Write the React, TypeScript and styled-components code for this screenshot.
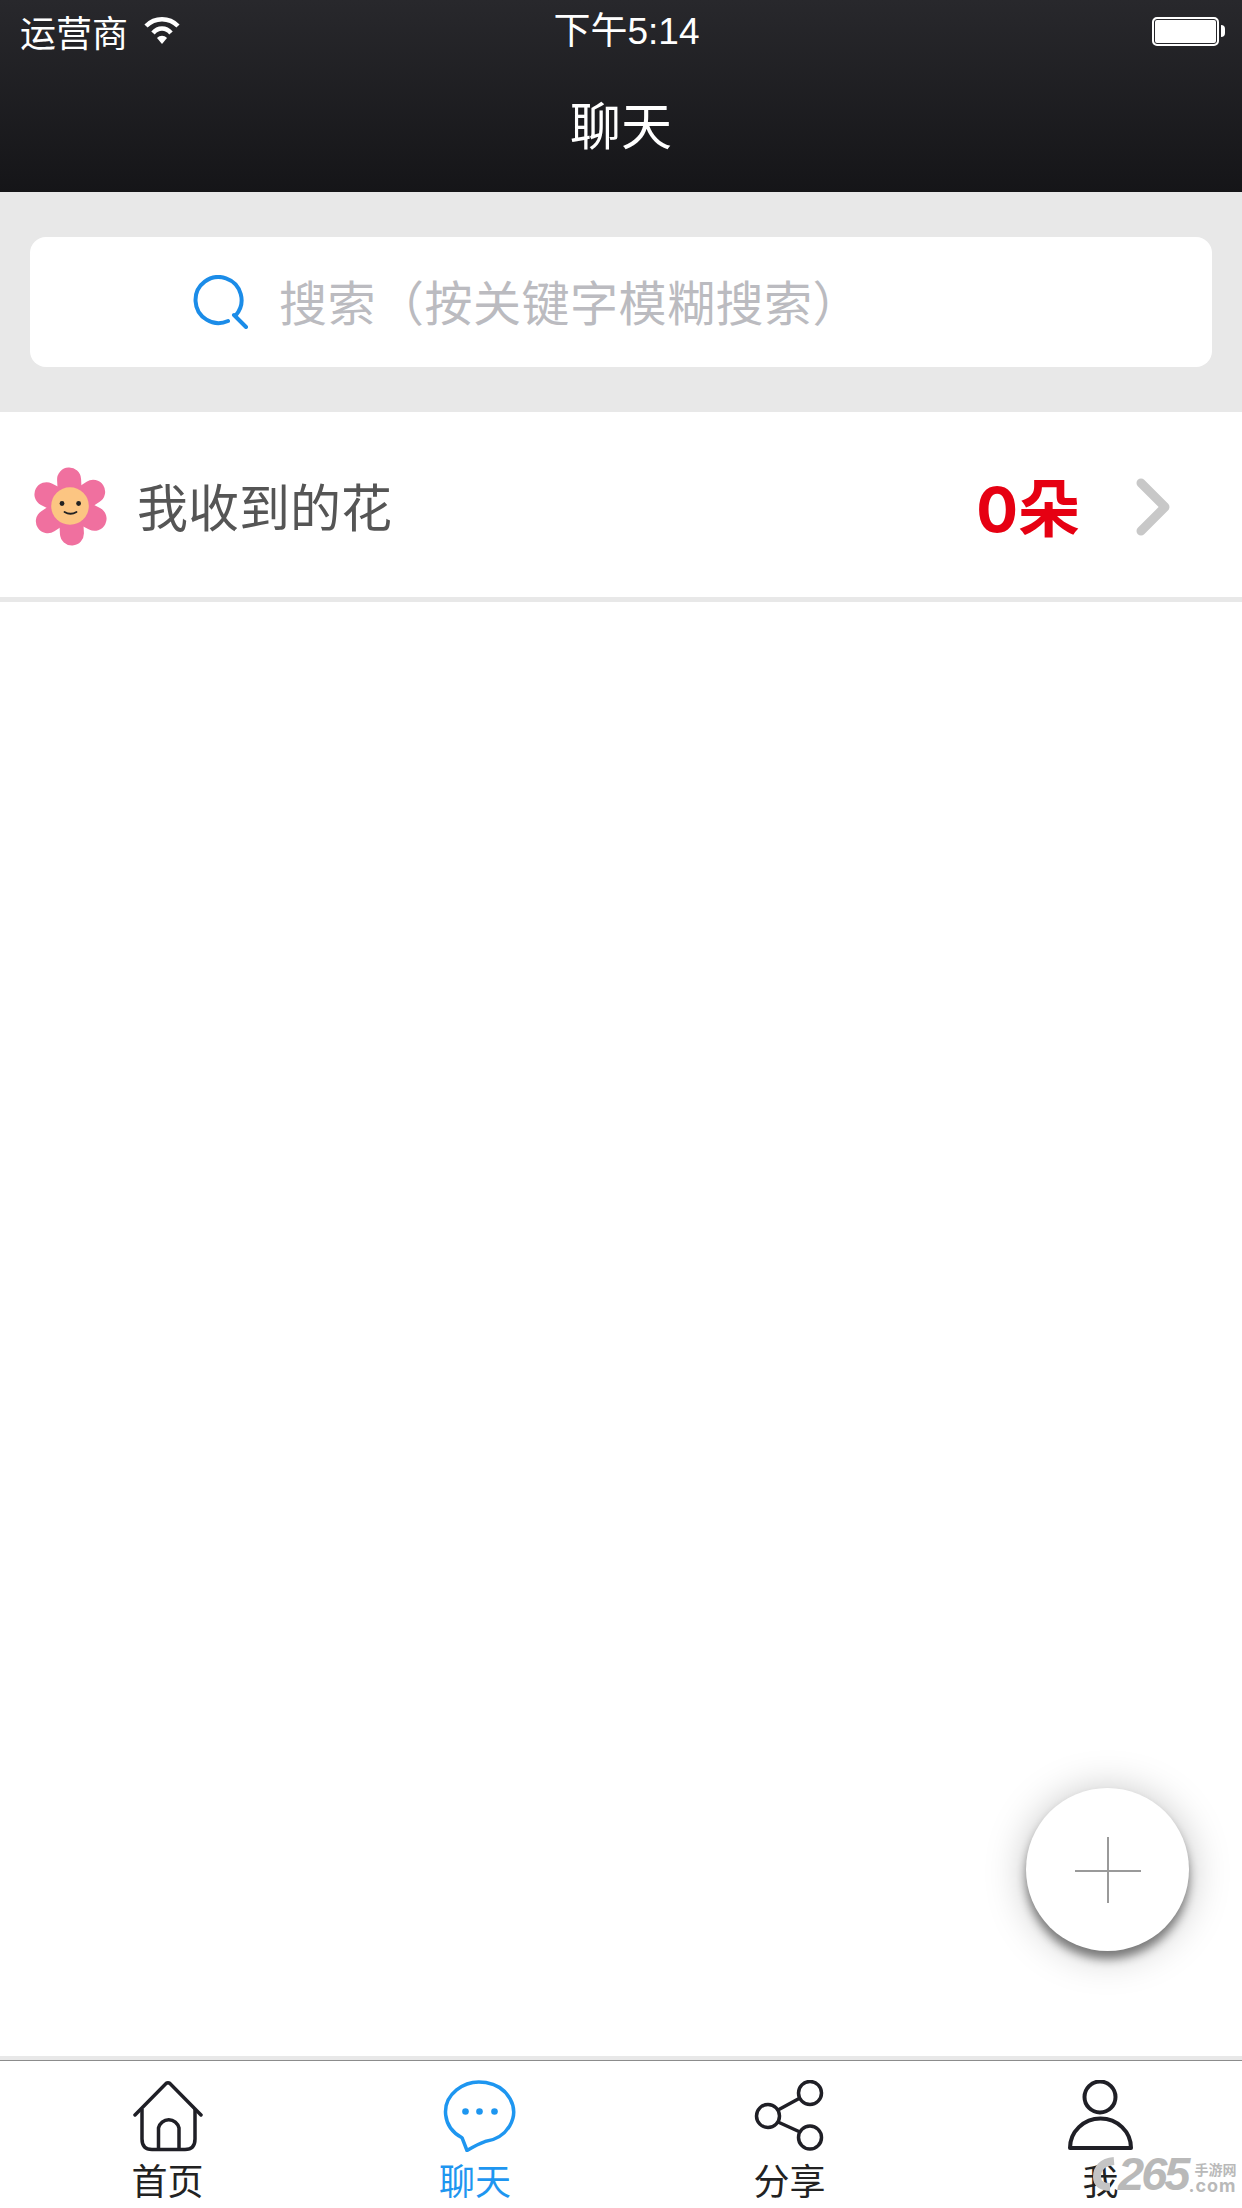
import styled, { createGlobalStyle } from "styled-components";

const CJK = `"Noto Sans CJK SC", "Liberation Sans", sans-serif`;

const GlobalStyle = createGlobalStyle`
  html, body {
    margin: 0;
    padding: 0;
    background: #fff;
  }
  * {
    box-sizing: border-box;
  }
`;

const Page = styled.div`
  position: relative;
  width: 1242px;
  height: 2208px;
  overflow: hidden;
  display: flex;
  flex-direction: column;
  background: #fff;
  font-family: ${CJK};
`;

const Header = styled.header`
  height: 192px;
  display: flex;
  flex-direction: column;
  color: #fff;
  background: linear-gradient(#28282c, #151518);
`;

const StatusBar = styled.div`
  height: 60px;
  display: grid;
  grid-template-columns: 1fr auto 1fr;
  align-items: center;
  padding: 0 17px 0 20px;
  font-size: 36px;
  line-height: 60px;
`;

const Carrier = styled.div`
  display: flex;
  align-items: center;
  gap: 16px;
  padding-bottom: 1px;
`;

const Clock = styled.div`
  padding: 2px 0 0 8px;
  font-family: "Liberation Sans", "Noto Sans CJK SC", sans-serif;
  font-size: 37px;
`;

const Battery = styled.div`
  justify-self: end;
  display: flex;
  align-items: center;
`;

const BatteryBody = styled.div`
  width: 67px;
  height: 29px;
  border: 2px solid #fff;
  border-radius: 5px;
  background: #fff;
  box-shadow: inset 0 0 0 1px #26262a;
`;

const BatteryNub = styled.div`
  width: 4px;
  height: 12px;
  margin-left: 2px;
  border-radius: 0 6px 6px 0;
  background: #fff;
`;

const Title = styled.h1`
  margin: 0;
  flex: 1;
  display: flex;
  align-items: center;
  justify-content: center;
  padding-bottom: 6px;
  font-size: 51px;
  font-weight: 400;
`;

const SearchSection = styled.div`
  height: 220px;
  padding: 45px 30px;
  background: #e8e8e8;
`;

const SearchBox = styled.div`
  height: 130px;
  display: flex;
  align-items: center;
  gap: 30px;
  padding-left: 163px;
  border-radius: 16px;
  background: #fff;
  color: #bbbbc0;
  font-size: 48px;
  letter-spacing: 0.5px;
  white-space: nowrap;
`;

const SearchHint = styled.span`
  padding-bottom: 5px;
`;

const FlowerRow = styled.div`
  height: 190px;
  display: flex;
  align-items: center;
  padding: 4px 71px 0 30px;
  border-bottom: 5px solid #e8e8e8;
`;

const RowLabel = styled.span`
  margin-left: 25px;
  padding-bottom: 4px;
  color: #555;
  font-size: 51px;
`;

const FlowerCount = styled.span`
  margin-left: auto;
  margin-right: 55px;
  padding-bottom: 4px;
  color: #e60012;
  font-family: Inter, "Noto Sans CJK SC", sans-serif;
  font-size: 62px;
  font-weight: 700;
`;

const Content = styled.main`
  flex: 1;
`;

const Fab = styled.button`
  position: absolute;
  left: 1026px;
  top: 1788px;
  width: 163px;
  height: 163px;
  padding: 0;
  display: flex;
  align-items: center;
  justify-content: center;
  border: none;
  border-radius: 50%;
  background: #fff;
  box-shadow: 0 8px 10px rgba(0, 0, 0, 0.45), 0 3px 40px rgba(0, 0, 0, 0.25);
`;

const TabBar = styled.nav`
  height: 152px;
  display: grid;
  grid-template-columns: repeat(4, 311px);
  padding-left: 12px;
  border-top: 4px solid #e8e8e8;
  box-shadow: inset 0 1px 0 #8c8c8c;
`;

const Tab = styled.div<{ $active?: boolean }>`
  display: flex;
  flex-direction: column;
  align-items: center;
  padding-top: 20px;
  gap: 9px;
  color: ${(p) => (p.$active ? "#1e96f0" : "#222")};
  font-size: 36px;
  line-height: 36px;
`;

const TabLabel = styled.span<{ $nudge?: number }>`
  padding-right: ${(p) => p.$nudge || 0}px;
`;

const Watermark = styled.div`
  position: absolute;
  right: 4px;
  bottom: 16px;
  width: 145px;
  height: 36px;
  display: flex;
  color: #b9b9b9;
  font-family: "Liberation Sans", sans-serif;
  font-weight: 700;
`;

const WatermarkNumber = styled.span`
  margin-left: 25px;
  font-size: 47px;
  font-style: italic;
  line-height: 36px;
  letter-spacing: -3px;
`;

const WatermarkSide = styled.div`
  display: flex;
  flex-direction: column;
  align-items: flex-start;
  margin-left: 7px;
  padding-top: 3px;
`;

const WatermarkCn = styled.span`
  font-family: ${CJK};
  font-size: 14px;
  line-height: 20px;
`;

const WatermarkCom = styled.span`
  margin-left: -6px;
  font-family: Inter, "Liberation Sans", sans-serif;
  font-size: 18px;
  line-height: 14px;
  letter-spacing: 1px;
`;

const Swoosh = styled.svg`
  position: absolute;
  left: 0;
  top: 1px;
`;

const WifiIcon = () => (
  <svg width="36" height="30" viewBox="0 0 36 30">
    <path d="M2 10C11 1 25 1 34 10" fill="none" stroke="#fff" strokeWidth="4.5" />
    <path d="M9 17C14 11 22 11 27 17" fill="none" stroke="#fff" strokeWidth="4.5" />
    <path d="M13 22C16 19 20 19 23 22L18 28Z" fill="#fff" />
  </svg>
);

const SearchIcon = () => (
  <svg width="56" height="54" viewBox="193 275 56 54">
    <path
      d="M228 321A23 23 0 1 1 236 315M234 315L246 327"
      fill="none"
      stroke="#1b8ce8"
      strokeWidth="4"
      strokeLinecap="round"
    />
  </svg>
);

const FlowerIcon = () => (
  <svg width="82" height="92" viewBox="30 462 82 92">
    {[0, 60, 120, 180, 240, 300].map((a) => (
      <rect
        key={a}
        x="-12"
        y="-39"
        width="24"
        height="41"
        rx="12"
        fill="#f0709f"
        transform={`translate(70.5 507.5) rotate(${a - 3})`}
      />
    ))}
    <circle cx="70" cy="507" r="18.8" fill="#fcc582" />
    <circle cx="62" cy="504.5" r="2.4" fill="#222" />
    <circle cx="78.6" cy="504.5" r="2.4" fill="#222" />
    <path d="M64.5 513Q70.5 516.5 76.5 513" fill="none" stroke="#222" strokeWidth="1.8" strokeLinecap="round" />
  </svg>
);

const ChevronIcon = () => (
  <svg width="36" height="60" viewBox="0 0 36 60">
    <path
      d="M6 6L30 30L6 54"
      fill="none"
      stroke="#c8c8c8"
      strokeWidth="9"
      strokeLinecap="round"
      strokeLinejoin="round"
    />
  </svg>
);

const PlusIcon = () => (
  <svg width="68" height="68" viewBox="0 0 68 68">
    <path d="M34 1V67M1 35H67" stroke="#9a9a9a" strokeWidth="2" fill="none" />
  </svg>
);

const HomeIcon = () => (
  <svg width="80" height="72" viewBox="127 2080 80 72" fill="none" stroke="#1f1f26" strokeWidth="3.5">
    <path d="M134 2115L165 2083.5Q167 2082 169 2083.5L200 2115" strokeLinecap="round" />
    <path d="M141 2109V2139Q141 2149.5 151 2149.5H184Q194 2149.5 194 2139V2109" />
    <path d="M157.5 2149V2128A10.5 10.5 0 0 1 178 2128V2149" />
  </svg>
);

const ChatIcon = () => (
  <svg width="80" height="72" viewBox="438 2080 80 72" fill="none" stroke="#1e96f0" strokeWidth="3.5">
    <path d="M461 2137.7A34 30 0 1 1 484 2141.6Q477 2144 466 2150.5Z" strokeLinejoin="round" />
    <g fill="#1e96f0" stroke="none">
      <circle cx="464.5" cy="2111.5" r="3.3" />
      <circle cx="478.5" cy="2111.5" r="3.3" />
      <circle cx="493.5" cy="2111.5" r="3.3" />
    </g>
  </svg>
);

const ShareIcon = () => (
  <svg width="80" height="72" viewBox="749 2080 80 72" fill="none" stroke="#1f1f26" strokeWidth="3.5">
    <circle cx="809" cy="2093" r="11.5" />
    <circle cx="767" cy="2116" r="11.5" />
    <circle cx="809" cy="2137.5" r="11.5" />
    <path d="M777 2110L799 2098M777 2122L799 2132" />
  </svg>
);

const PersonIcon = () => (
  <svg width="80" height="72" viewBox="1060 2080 80 72" fill="none" stroke="#1f1f26" strokeWidth="4">
    <circle cx="1099" cy="2097" r="15.5" />
    <path d="M1069 2148A30.5 29.5 0 0 1 1130 2148Z" strokeLinejoin="round" />
  </svg>
);

const tabs = [
  { label: "首页", icon: <HomeIcon /> },
  { label: "聊天", icon: <ChatIcon />, active: true, nudge: 7 },
  { label: "分享", icon: <ShareIcon /> },
  { label: "我", icon: <PersonIcon /> },
];

const App = () => {
  return (
    <Page>
      <GlobalStyle />
      <Header>
        <StatusBar>
          <Carrier>
            运营商
            <WifiIcon />
          </Carrier>
          <Clock>下午5:14</Clock>
          <Battery>
            <BatteryBody />
            <BatteryNub />
          </Battery>
        </StatusBar>
        <Title>聊天</Title>
      </Header>
      <SearchSection>
        <SearchBox>
          <SearchIcon />
          <SearchHint>搜索（按关键字模糊搜索）</SearchHint>
        </SearchBox>
      </SearchSection>
      <FlowerRow>
        <FlowerIcon />
        <RowLabel>我收到的花</RowLabel>
        <FlowerCount>0朵</FlowerCount>
        <ChevronIcon />
      </FlowerRow>
      <Content />
      <Fab>
        <PlusIcon />
      </Fab>
      <TabBar>
        {tabs.map((t) => (
          <Tab key={t.label} $active={t.active}>
            {t.icon}
            <TabLabel $nudge={t.nudge}>{t.label}</TabLabel>
          </Tab>
        ))}
      </TabBar>
      <Watermark>
        <Swoosh width="24" height="34" viewBox="0 0 24 34">
          <path d="M21 4C9 5 4 12 4 20C4 27 9 30 17 30" fill="none" stroke="#c4c4c4" strokeWidth="8" />
        </Swoosh>
        <WatermarkNumber>265</WatermarkNumber>
        <WatermarkSide>
          <WatermarkCn>手游网</WatermarkCn>
          <WatermarkCom>.com</WatermarkCom>
        </WatermarkSide>
      </Watermark>
    </Page>
  );
};

export default App;
